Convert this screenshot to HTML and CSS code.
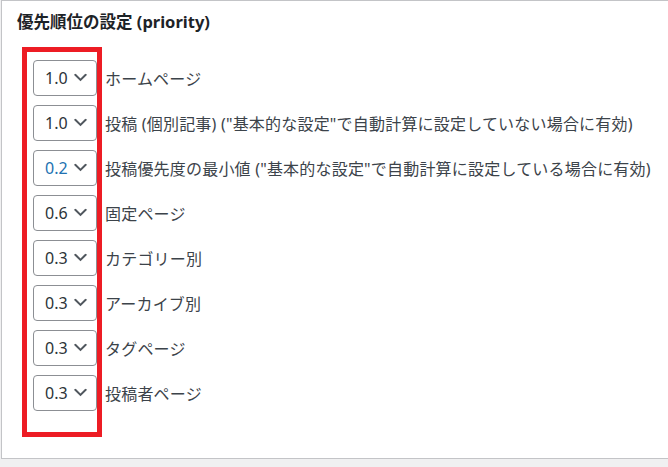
FILE: index.html
```html
<!DOCTYPE html>
<html lang="ja">
<head>
    <meta charset="UTF-8">
    <meta name="viewport" content="width=device-width, initial-scale=1.0">
    <title>優先順位の設定</title>
    <link rel="stylesheet" href="styles.css">
</head>
<body>
    <div class="postbox">
        <h2>優先順位の設定 (priority)</h2>
        <div class="priority-list">
            <div class="priority-row">
                <div class="select-wrap">
                    <select><option>1.0</option></select>
                    <svg class="chevron" viewBox="0 0 20 20"><path d="M5 6l5 5 5-5 2 1-7 7-7-7 2-1z"/></svg>
                </div>
                <label>ホームページ</label>
            </div>
            <div class="priority-row">
                <div class="select-wrap">
                    <select><option>1.0</option></select>
                    <svg class="chevron" viewBox="0 0 20 20"><path d="M5 6l5 5 5-5 2 1-7 7-7-7 2-1z"/></svg>
                </div>
                <label>投稿 (個別記事) ("基本的な設定"で自動計算に設定していない場合に有効)</label>
            </div>
            <div class="priority-row">
                <div class="select-wrap">
                    <select class="is-hover"><option>0.2</option></select>
                    <svg class="chevron" viewBox="0 0 20 20"><path d="M5 6l5 5 5-5 2 1-7 7-7-7 2-1z"/></svg>
                </div>
                <label>投稿優先度の最小値 ("基本的な設定"で自動計算に設定している場合に有効)</label>
            </div>
            <div class="priority-row">
                <div class="select-wrap">
                    <select><option>0.6</option></select>
                    <svg class="chevron" viewBox="0 0 20 20"><path d="M5 6l5 5 5-5 2 1-7 7-7-7 2-1z"/></svg>
                </div>
                <label>固定ページ</label>
            </div>
            <div class="priority-row">
                <div class="select-wrap">
                    <select><option>0.3</option></select>
                    <svg class="chevron" viewBox="0 0 20 20"><path d="M5 6l5 5 5-5 2 1-7 7-7-7 2-1z"/></svg>
                </div>
                <label>カテゴリー別</label>
            </div>
            <div class="priority-row">
                <div class="select-wrap">
                    <select><option>0.3</option></select>
                    <svg class="chevron" viewBox="0 0 20 20"><path d="M5 6l5 5 5-5 2 1-7 7-7-7 2-1z"/></svg>
                </div>
                <label>アーカイブ別</label>
            </div>
            <div class="priority-row">
                <div class="select-wrap">
                    <select><option>0.3</option></select>
                    <svg class="chevron" viewBox="0 0 20 20"><path d="M5 6l5 5 5-5 2 1-7 7-7-7 2-1z"/></svg>
                </div>
                <label>タグページ</label>
            </div>
            <div class="priority-row">
                <div class="select-wrap">
                    <select><option>0.3</option></select>
                    <svg class="chevron" viewBox="0 0 20 20"><path d="M5 6l5 5 5-5 2 1-7 7-7-7 2-1z"/></svg>
                </div>
                <label>投稿者ページ</label>
            </div>
        </div>
        <!-- annotation box drawn over the selects -->
        <div class="highlight"></div>
    </div>
</body>
</html>
```

FILE: styles.css
```css
body {
    margin: 0;
    padding: 0;
    background-color: #f0f0f1;
    overflow: hidden;
    font-family: "Noto Sans", "Noto Sans CJK JP", sans-serif;
}

.postbox {
    position: relative;
    margin-left: 1px;
    height: 457px;
    background-color: #fff;
    border: 1px solid #c3c4c7;
    border-right: none;
}

.postbox h2 {
    margin: 0;
    padding: 9px 15px 0;
    font-size: 16.5px;
    line-height: 24px;
    font-weight: 700;
    color: #1d2327;
}

.priority-list {
    margin-top: 26px;
    padding-left: 31px;
}

.priority-row {
    display: flex;
    align-items: center;
    gap: 8px;
    height: 36px;
    margin-bottom: 9px;
}

.priority-row label {
    font-size: 16px;
    letter-spacing: 0.2px;
    color: #3c434a;
    white-space: nowrap;
}

.select-wrap {
    position: relative;
    width: 64px;
    height: 36px;
    flex-shrink: 0;
}

.select-wrap select {
    -webkit-appearance: none;
    appearance: none;
    box-sizing: border-box;
    width: 100%;
    height: 100%;
    margin: 0;
    padding: 0 24px 0 11px;
    border: 1px solid #8c8f94;
    border-radius: 4px;
    background-color: #fff;
    font-family: "Noto Sans", sans-serif;
    font-size: 16px;
    color: #2c3338;
}

.select-wrap select.is-hover {
    color: #2271b1;
}

.chevron {
    position: absolute;
    right: 7px;
    top: 50%;
    margin-top: -10px;
    width: 19px;
    height: 19px;
    fill: #50575e;
    pointer-events: none;
}

.highlight {
    position: absolute;
    left: 20px;
    top: 46px;
    width: 70px;
    height: 380px;
    border: 5px solid #ed1c24;
    pointer-events: none;
}
```
